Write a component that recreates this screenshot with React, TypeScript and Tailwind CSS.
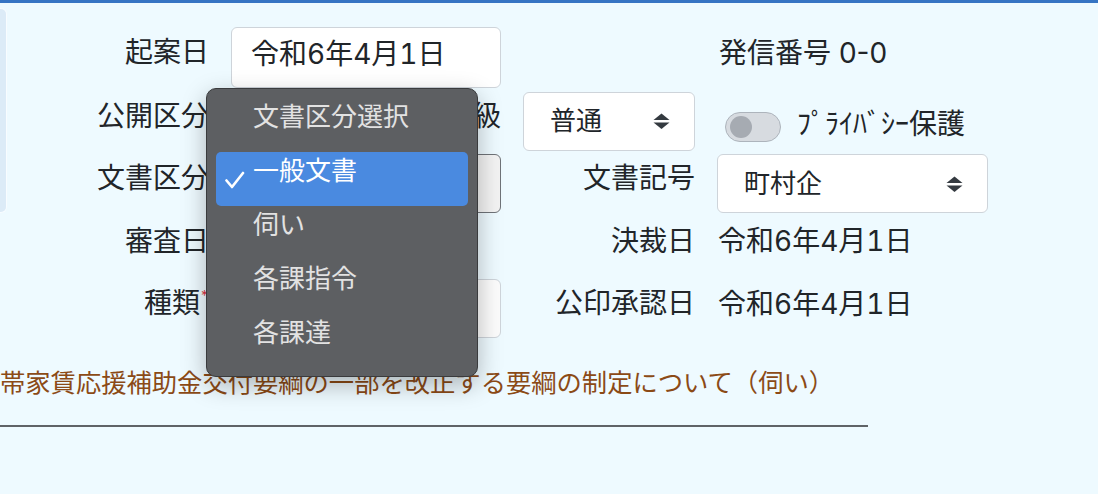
import React from 'react';

const SelectArrows: React.FC = () => (
  <svg width="17" height="16" viewBox="0 0 17 16" className="shrink-0">
    <path d="M8.5 0.5 L16.5 7 H0.5 Z" fill="#343a40" />
    <path d="M8.5 16 L0.5 9.5 H16.5 Z" fill="#343a40" />
  </svg>
);

const Label: React.FC<{ children: React.ReactNode }> = ({ children }) => (
  <div className="flex items-center justify-end pb-[11px] text-[28px] leading-none whitespace-nowrap">{children}</div>
);

const options = ['文書区分選択', '一般文書', '伺い', '各課指令', '各課達'];

const App: React.FC = () => {
  return (
    <div className="relative h-[494px] w-full overflow-hidden bg-[#eefaff] font-['Inter','Noto_Sans_CJK_JP',sans-serif] tabular-nums text-[#212529]">
      {/* top bar */}
      <div className="h-[3px] bg-[#3674c3]" />

      <div className="flex">
        {/* edge of side card */}
        <div className="mt-[5px] h-[205px] w-[7px] shrink-0 rounded-r-[6px] border border-l-0 border-[#f8fcff] bg-[#dcebf7]" />

        <div className="grid grid-cols-[202px_270px_172px_1fr] grid-rows-[61px_59px_59px_59px_59px] gap-x-[22px] gap-y-[3.5px] pt-[24px]">
          {/* row 1 */}
          <Label>起案日</Label>
          <div className="flex items-center rounded-[6px] border border-[#ced4da] bg-white pb-[7px] pl-[19px] text-[28px] leading-none">
            令和6年4月1日
          </div>
          <div />
          <div className="flex items-center pb-[10px] pl-[2px] text-[28px] leading-none normal-nums">発信番号 0-0</div>

          {/* row 2 */}
          <Label>公開区分</Label>
          <div className="flex items-center gap-[20px]">
            <div className="h-full flex-1 rounded-[6px] border border-[#ced4da] bg-white" />
            <div className="pb-[10px] text-[28px] leading-none">取扱級</div>
          </div>
          <div className="flex items-center justify-between rounded-[6px] border border-[#ced4da] bg-white pl-[26px] pr-[24px] text-[26px] leading-none">
            <span>普通</span>
            <SelectArrows />
          </div>
          <div className="flex items-center pt-[12px] pl-[8px]">
            <div className="flex h-[30px] w-[56px] items-center rounded-full border border-[#adb4bc] bg-[#d7dbe0] pl-[4px]">
              <div className="h-[22px] w-[22px] rounded-full bg-[#a6abb2]" />
            </div>
            <span className="ml-[16px] pb-[6px] text-[28px] leading-none">ﾌﾟﾗｲﾊﾞｼｰ保護</span>
          </div>

          {/* row 3 */}
          <Label>文書区分</Label>
          <div className="flex items-center justify-end rounded-[6px] border-[1.5px] border-[#6f7378] bg-[#f3f3f3] pr-[24px]">
            <SelectArrows />
          </div>
          <Label>文書記号</Label>
          <div className="flex w-[271px] items-center justify-between rounded-[6px] border border-[#ced4da] bg-white pl-[26px] pr-[24px] text-[26px] leading-none">
            <span>町村企</span>
            <SelectArrows />
          </div>

          {/* row 4 */}
          <Label>審査日</Label>
          <div />
          <Label>決裁日</Label>
          <div className="flex items-center pb-[10px] pl-[1px] text-[28px] leading-none">令和6年4月1日</div>

          {/* row 5 */}
          <Label>
            種類<span className="-mt-[14px] text-[14px] text-[#dc3545]">*</span>
          </Label>
          <div className="rounded-[6px] border border-[#ced4da] bg-[#fcfcfc]" />
          <Label>公印承認日</Label>
          <div className="flex items-center pb-[10px] pl-[1px] text-[28px] leading-none">令和6年4月1日</div>
        </div>
      </div>

      {/* document title */}
      <div className="mt-[27px] whitespace-nowrap text-[25.3px] leading-[36px] text-[#8b4a16]">
        帯家賃応援補助金交付要綱の一部を改正する要綱の制定について（伺い）
      </div>
      <div className="mt-[24px] h-[2px] w-[868px] bg-[#5f6367]" />

      {/* open select menu */}
      <div className="absolute left-[206px] top-[88px] h-[289px] w-[272px] rounded-[10px] border border-[#3a3b3d] bg-[#5d5f62] px-[9px] pt-[9px] shadow-[0_8px_24px_rgba(0,0,0,0.28)]">
        {options.map((o, i) => (
          <div
            key={o}
            className={
              i === 1
                ? 'relative flex h-[54px] items-center rounded-[5px] bg-[#4a8ae0] pb-[16px] pl-[37px] text-[26px] leading-none text-white'
                : 'relative flex h-[54px] items-center pb-[16px] pl-[37px] text-[26px] leading-none text-[#e2e2e2]'
            }
          >
            {i === 1 && (
              <svg width="20" height="18" viewBox="0 0 20 18" className="absolute left-[9px] top-[19px]">
                <path d="M1.5 9.5 L7 16 L18 2" fill="none" stroke="white" strokeWidth="2.6" strokeLinecap="round" strokeLinejoin="round" />
              </svg>
            )}
            {o}
          </div>
        ))}
      </div>
    </div>
  );
};

export default App;
